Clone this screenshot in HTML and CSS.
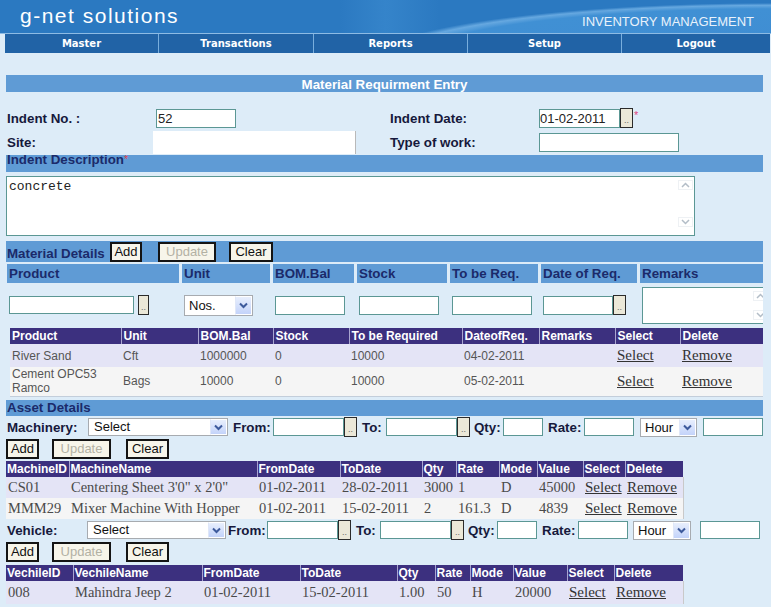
FILE: index.html
```html
<!DOCTYPE html>
<html>
<head>
<meta charset="utf-8">
<title>Material Requirment Entry</title>
<link rel="stylesheet" href="styles.css">
</head>
<body>
<header class="masthead">
  <div class="brand">g-net solutions</div>
  <div class="tagline">INVENTORY MANAGEMENT</div>
</header>
<nav class="menu">
  <a class="menu-item">Master</a>
  <a class="menu-item">Transactions</a>
  <a class="menu-item">Reports</a>
  <a class="menu-item">Setup</a>
  <a class="menu-item">Logout</a>
</nav>
<main class="page">
  <div class="title-bar">Material Requirment Entry</div>

  <div class="head-form">
    <div class="lbl">Indent No. :</div>
    <div class="cell"><input class="txt w-indent" value="52"></div>
    <div class="lbl">Indent Date:</div>
    <div class="cell"><input class="txt w-date" value="01-02-2011"><button class="pick">..</button><span class="req">*</span></div>
    <div class="lbl">Site:</div>
    <div class="cell"><div class="site-box"></div></div>
    <div class="lbl">Type of work:</div>
    <div class="cell"><input class="txt w-work" value=""></div>
  </div>

  <div class="bar bar-desc"><span class="bar-label">Indent Description<span class="req-inline">*</span></span></div>

  <div class="memo">
    <div class="memo-text">concrete</div>
    <div class="vscroll">
      <span class="sb-arrow"><svg width="9" height="6" viewBox="0 0 9 6"><path d="M1 5 L4.5 1.5 L8 5" fill="none" stroke="#b3bdc7" stroke-width="1.5"/></svg></span>
      <span class="sb-arrow"><svg width="9" height="6" viewBox="0 0 9 6"><path d="M1 1 L4.5 4.5 L8 1" fill="none" stroke="#b3bdc7" stroke-width="1.5"/></svg></span>
    </div>
  </div>

  <div class="bar bar-tools">
    <span class="bar-title">Material Details</span>
    <button class="btn b-add">Add</button>
    <button class="btn b-update">Update</button>
    <button class="btn b-clear">Clear</button>
  </div>

  <div class="mat-grid mat-head">
    <div class="mh">Product</div>
    <div class="mh">Unit</div>
    <div class="mh">BOM.Bal</div>
    <div class="mh">Stock</div>
    <div class="mh">To be Req.</div>
    <div class="mh">Date of Req.</div>
    <div class="mh">Remarks</div>
  </div>
  <div class="mat-grid mat-inputs">
    <div class="mi"><input class="txt w-prod"><button class="pick pick-prod">..</button></div>
    <div class="mi"><div class="dd w-unit"><span class="dd-text">Nos.</span><span class="dd-btn"><svg width="9" height="7" viewBox="0 0 9 7"><path d="M1 1.5 L4.5 5 L8 1.5" fill="none" stroke="#3d5a9c" stroke-width="2"/></svg></span></div></div>
    <div class="mi"><input class="txt w-bom"></div>
    <div class="mi"><input class="txt w-stock"></div>
    <div class="mi"><input class="txt w-toreq"></div>
    <div class="mi"><input class="txt w-dreq"><button class="pick">..</button></div>
    <div class="mi">
      <div class="remarks-box">
        <div class="vscroll vscroll-small">
          <span class="sb-arrow"><svg width="9" height="6" viewBox="0 0 9 6"><path d="M1 5 L4.5 1.5 L8 5" fill="none" stroke="#b3bdc7" stroke-width="1.5"/></svg></span>
          <span class="sb-arrow"><svg width="9" height="6" viewBox="0 0 9 6"><path d="M1 1 L4.5 4.5 L8 1" fill="none" stroke="#b3bdc7" stroke-width="1.5"/></svg></span>
        </div>
      </div>
    </div>
  </div>

  <table class="grid mat-table">
    <thead>
      <tr>
        <th class="m1">Product</th><th class="m2">Unit</th><th class="m3">BOM.Bal</th><th class="m4">Stock</th><th class="m5">To be Required</th><th class="m6">DateofReq.</th><th class="m7">Remarks</th><th class="m8">Select</th><th class="m9">Delete</th>
      </tr>
    </thead>
    <tbody>
      <tr class="r1 mr1">
        <td>River Sand</td><td>Cft</td><td>1000000</td><td>0</td><td>10000</td><td>04-02-2011</td><td></td><td><a class="lnk">Select</a></td><td><a class="lnk">Remove</a></td>
      </tr>
      <tr class="r2 mr2">
        <td>Cement OPC53 Ramco</td><td>Bags</td><td>10000</td><td>0</td><td>10000</td><td>05-02-2011</td><td></td><td><a class="lnk">Select</a></td><td><a class="lnk">Remove</a></td>
      </tr>
    </tbody>
  </table>

  <div class="bar bar-asset">Asset Details</div>

  <div class="asset-row machinery">
    <span class="alabel first">Machinery:</span>
    <div class="dd w-mach"><span class="dd-text">Select</span><span class="dd-btn"><svg width="9" height="7" viewBox="0 0 9 7"><path d="M1 1.5 L4.5 5 L8 1.5" fill="none" stroke="#3d5a9c" stroke-width="2"/></svg></span></div>
    <span class="alabel">From:</span>
    <input class="txt w-adate">
    <button class="pick">..</button>
    <span class="alabel">To:</span>
    <input class="txt w-adate">
    <button class="pick">..</button>
    <span class="alabel">Qty:</span>
    <input class="txt w-qty">
    <span class="alabel">Rate:</span>
    <input class="txt w-rate">
    <div class="dd w-hour"><span class="dd-text">Hour</span><span class="dd-btn"><svg width="9" height="7" viewBox="0 0 9 7"><path d="M1 1.5 L4.5 5 L8 1.5" fill="none" stroke="#3d5a9c" stroke-width="2"/></svg></span></div>
    <input class="txt w-last">
  </div>
  <div class="btn-row">
    <button class="btn a-add">Add</button>
    <button class="btn a-update">Update</button>
    <button class="btn a-clear">Clear</button>
  </div>

  <table class="grid asset-table machine-table">
    <thead>
      <tr>
        <th class="k1">MachineID</th><th class="k2">MachineName</th><th class="k3">FromDate</th><th class="k4">ToDate</th><th class="k5">Qty</th><th class="k6">Rate</th><th class="k7">Mode</th><th class="k8">Value</th><th class="k9">Select</th><th class="k10">Delete</th>
      </tr>
    </thead>
    <tbody>
      <tr class="r1">
        <td>CS01</td><td>Centering Sheet 3'0" x 2'0"</td><td>01-02-2011</td><td>28-02-2011</td><td>3000</td><td>1</td><td>D</td><td>45000</td><td><a class="lnk">Select</a></td><td><a class="lnk">Remove</a></td>
      </tr>
      <tr class="r2">
        <td>MMM29</td><td>Mixer Machine With Hopper</td><td>01-02-2011</td><td>15-02-2011</td><td>2</td><td>161.3</td><td>D</td><td>4839</td><td><a class="lnk">Select</a></td><td><a class="lnk">Remove</a></td>
      </tr>
    </tbody>
  </table>

  <div class="asset-row vehicle">
    <span class="alabel first">Vehicle:</span>
    <div class="dd w-veh"><span class="dd-text">Select</span><span class="dd-btn"><svg width="9" height="7" viewBox="0 0 9 7"><path d="M1 1.5 L4.5 5 L8 1.5" fill="none" stroke="#3d5a9c" stroke-width="2"/></svg></span></div>
    <span class="alabel">From:</span>
    <input class="txt w-adate">
    <button class="pick">..</button>
    <span class="alabel">To:</span>
    <input class="txt w-adate">
    <button class="pick">..</button>
    <span class="alabel">Qty:</span>
    <input class="txt w-qty">
    <span class="alabel">Rate:</span>
    <input class="txt w-rate">
    <div class="dd w-hour2"><span class="dd-text">Hour</span><span class="dd-btn"><svg width="9" height="7" viewBox="0 0 9 7"><path d="M1 1.5 L4.5 5 L8 1.5" fill="none" stroke="#3d5a9c" stroke-width="2"/></svg></span></div>
    <input class="txt w-last">
  </div>
  <div class="btn-row">
    <button class="btn a-add">Add</button>
    <button class="btn a-update">Update</button>
    <button class="btn a-clear">Clear</button>
  </div>

  <table class="grid asset-table vehicle-table">
    <thead>
      <tr>
        <th class="v1">VechileID</th><th class="v2">VechileName</th><th class="v3">FromDate</th><th class="v4">ToDate</th><th class="v5">Qty</th><th class="v6">Rate</th><th class="v7">Mode</th><th class="v8">Value</th><th class="v9">Select</th><th class="v10">Delete</th>
      </tr>
    </thead>
    <tbody>
      <tr class="r1 vr1">
        <td>008</td><td>Mahindra Jeep 2</td><td>01-02-2011</td><td>15-02-2011</td><td>1.00</td><td>50</td><td>H</td><td>20000</td><td><a class="lnk">Select</a></td><td><a class="lnk">Remove</a></td>
      </tr>
    </tbody>
  </table>
</main>
</body>
</html>
```

FILE: styles.css
```css
* { box-sizing: border-box; }
html, body { margin: 0; padding: 0; }
body {
  width: 771px;
  height: 607px;
  overflow: hidden;
  background: #ddecf8;
  font-family: "Liberation Sans", Arial, sans-serif;
  color: #16193c;
}

/* ---------- masthead ---------- */
.masthead {
  height: 34px;
  display: flex;
  justify-content: space-between;
  border-bottom: 1px solid #8dbbe4;
  background:
    radial-gradient(ellipse 400px 58px at 100% 61px, #3f8cd2 0%, #4090d4 90%, #66a8e0 96%, rgba(43,121,193,0) 100%),
    linear-gradient(90deg, #2b79c1 0%, #2b79c1 44%, #3584ca 50%, #2b79c1 57%, #2b79c1 100%);
}
.brand {
  color: #fff;
  font-size: 21px;
  letter-spacing: 1.5px;
  line-height: 24px;
  padding: 4px 0 0 20px;
}
.tagline {
  color: #e9f2fb;
  font-size: 13px;
  line-height: 15px;
  padding: 14px 17px 0 0;
}

/* ---------- menu ---------- */
.menu {
  display: grid;
  grid-template-columns: 153px 155px 154px 154px 149px;
  margin-left: 5px;
  width: 765px;
  height: 19px;
  background: #2163a6;
}
.menu-item {
  border-left: 1px solid #79aedd;
  color: #fff;
  font-family: "DejaVu Sans", Verdana, sans-serif;
  font-weight: bold;
  font-size: 10px;
  line-height: 19px;
  text-align: center;
}
.menu-item:first-child { border-left: 0; }

/* ---------- page ---------- */
.page {
  margin: 22px 0 0 6px;
  width: 757px;
  overflow: hidden;
}
.title-bar {
  height: 17px;
  background: #5f9bd5;
  color: #fff;
  font-weight: bold;
  font-size: 13.33px;
  line-height: 16px;
  padding-top: 2px;
  text-align: center;
  overflow: hidden;
}

/* ---------- head form ---------- */
.head-form {
  display: grid;
  grid-template-columns: 147px 236px 150px 1fr;
  grid-template-rows: 24px 25px;
  padding-top: 14px;
  align-items: center;
}
.lbl {
  font-weight: bold;
  font-size: 13.33px;
  line-height: 15px;
  padding-left: 1px;
  color: #16193c;
}
.cell { display: flex; align-items: center; }

.txt {
  height: 19px;
  border: 1px solid #5b9794;
  background: #fff;
  font-family: "Liberation Sans", Arial, sans-serif;
  font-size: 13px;
  color: #222;
  padding: 0 1px;
  margin: 0;
  outline: none;
  border-radius: 0;
}
.w-indent { width: 80px; margin-left: 3px; }
.w-date { width: 81px; padding: 0; }
.w-work { width: 140px; }

.pick {
  width: 13px;
  height: 20px;
  border: 1px solid #2b2b2b;
  background: #ebe8d8;
  margin: 0;
  padding: 0 0 3px 0;
  font-family: "Liberation Sans", Arial, sans-serif;
  font-size: 9px;
  color: #6a6a6a;
  line-height: 8px;
  display: flex;
  align-items: flex-end;
  justify-content: center;
  border-radius: 0;
}
.req {
  color: #e0457d;
  font-size: 11px;
  line-height: 10px;
  align-self: flex-start;
  margin: 2px 0 0 1px;
}
.site-box {
  width: 203px;
  height: 23px;
  background: #fff;
  border-right: 1px solid #b9b9b9;
}

/* ---------- bars ---------- */
.bar {
  background: #5f9bd5;
  color: #1b2a6a;
  font-weight: bold;
  font-size: 13.33px;
}
.bar-desc {
  display: flex;
  height: 17px;
  padding-left: 1px;
}
.bar-label {
  display: block;
  line-height: 13px;
  margin-top: -2px;
}
.req-inline {
  color: #e0404a;
  font-size: 10px;
  vertical-align: top;
  font-weight: normal;
}

.memo {
  display: flex;
  margin-top: 4px;
  width: 689px;
  height: 60px;
  border: 1px solid #5b9794;
  background: #fff;
}
.memo-text {
  flex: 1;
  font-family: "Liberation Mono", "Courier New", monospace;
  font-size: 13px;
  line-height: 15px;
  padding: 2px;
  color: #222;
}
.vscroll {
  width: 16px;
  display: flex;
  flex-direction: column;
  justify-content: space-between;
  padding: 3px 1px 8px 0;
}
.vscroll-small { padding: 3px 1px 3px 0; }
.sb-arrow {
  width: 15px;
  height: 10px;
  display: flex;
  align-items: center;
  justify-content: center;
  border: 1px solid #eef1f4;
}

.bar-tools {
  margin-top: 5px;
  height: 21px;
  display: flex;
  align-items: flex-end;
}
.bar-title {
  width: 104px;
  padding: 0 0 1px 1px;
  line-height: 15px;
}
.btn {
  height: 20px;
  border: 2px solid #141414;
  background: #f7f5ea;
  font-family: "Liberation Sans", Arial, sans-serif;
  font-size: 13px;
  color: #111;
  padding: 0;
  margin: 0;
  line-height: 16px;
  border-radius: 0;
}
.b-add { width: 32px; }
.b-update { width: 58px; margin-left: 16px; color: #b3b1a4; }
.b-clear { width: 44px; margin-left: 13px; }

/* ---------- material entry grid ---------- */
.mat-grid {
  display: grid;
  grid-template-columns: 172px 88px 81px 90px 88px 96px 1fr;
  column-gap: 3px;
  margin-left: 1px;
}
.mat-head { margin-top: 2px; height: 19px; }
.mh {
  background: #5f9bd5;
  color: #1b2a6a;
  font-weight: bold;
  font-size: 13.33px;
  line-height: 19px;
  padding-left: 2px;
  white-space: nowrap;
}
.mat-inputs { height: 44px; align-items: center; }
.mi { display: flex; align-items: center; padding-left: 2px; }
.w-prod { width: 125px; height: 18px; }
.pick-prod { width: 11px; margin-left: 4px; }
.w-bom { width: 70px; }
.w-stock { width: 80px; }
.w-toreq { width: 80px; }
.w-dreq { width: 70px; }

.dd {
  display: flex;
  border: 1px solid #a7abb0;
  background: #fff;
}
.dd-text {
  flex: 1;
  font-size: 13px;
  color: #111;
  padding-left: 4px;
  white-space: nowrap;
}
.dd-btn {
  width: 17px;
  display: flex;
  align-items: center;
  justify-content: center;
  background: linear-gradient(#e8effd, #c3d3fa);
  border: 1px solid #fff;
  border-left-color: #dfe7f8;
}
.w-unit { width: 69px; height: 21px; }
.w-unit .dd-text { line-height: 19px; }

.remarks-box {
  width: 128px;
  height: 37px;
  border: 1px solid #5b9794;
  background: #fff;
  display: flex;
  justify-content: flex-end;
}

/* ---------- data grids ---------- */
.grid {
  border-collapse: collapse;
  table-layout: fixed;
}
.grid th {
  background: #3c307f;
  color: #fff;
  font-weight: bold;
  font-size: 12px;
  text-align: left;
  height: 16px;
  padding: 0 1px;
  line-height: 14px;
  border-left: 1px solid #a9a5d0;
  white-space: nowrap;
  overflow: hidden;
}
.grid th:first-child { border-left: 0; }
.r1 { background: #e4e4f6; }
.r2 { background: #f5f5f5; }
.lnk {
  font-family: "Liberation Serif", "Times New Roman", serif;
  font-size: 15px;
  color: #333;
  text-decoration: underline;
}

.mat-table {
  margin: 1px 0 0 4px;
  width: 753px;
  border-bottom: 1px solid #c3cedb;
}
.mat-table td {
  font-size: 12px;
  color: #555;
  padding: 0 2px;
  line-height: 14px;
}
.mat-table th { padding-left: 2px; }
.mr1 { height: 23px; }
.mr2 { height: 29px; }
.m1 { width: 111px; } .m2 { width: 77px; } .m3 { width: 75px; }
.m4 { width: 76px; } .m5 { width: 113px; } .m6 { width: 77px; }
.m7 { width: 76px; } .m8 { width: 65px; } .m9 { width: 83px; }

.bar-asset {
  margin-top: 3px;
  height: 16px;
  line-height: 16px;
  padding-left: 1px;
}

/* ---------- asset rows ---------- */
.asset-row {
  display: grid;
  align-items: center;
  height: 21px;
  margin-top: 1px;
}
.machinery {
  grid-template-columns: 82px 145px 40px 71px 18px 24px 71px 17px 29px 45px 36px 56px 63px 60px;
}
.vehicle {
  grid-template-columns: 81px 141px 39px 71px 18px 24px 71px 17px 29px 45px 36px 55px 67px 60px;
}
.alabel {
  font-weight: bold;
  font-size: 13.33px;
  line-height: 15px;
  color: #16193c;
  white-space: nowrap;
}
.alabel.first { padding-left: 1px; }
.asset-row .txt { height: 18px; }
.w-adate { width: 71px; }
.w-qty { width: 40px; }
.w-rate { width: 50px; }
.w-last { width: 60px; }
.w-mach { width: 140px; height: 18px; }
.w-veh { width: 139px; height: 18px; }
.w-hour { width: 57px; height: 19px; }
.w-hour2 { width: 58px; height: 19px; }
.w-mach .dd-text, .w-veh .dd-text { line-height: 16px; padding-left: 5px; }
.w-hour .dd-text, .w-hour2 .dd-text { line-height: 17px; }

.btn-row {
  display: flex;
  height: 20px;
  margin-top: 1px;
}
.a-add { width: 33px; }
.a-update { width: 59px; margin-left: 13px; color: #b3b1a4; }
.a-clear { width: 43px; margin-left: 15px; }

.asset-table { width: 677px; }
.asset-table td {
  font-family: "Liberation Serif", "Times New Roman", serif;
  font-size: 14.5px;
  color: #4a4a4a;
  padding: 0 2px;
  height: 21px;
  white-space: nowrap;
  overflow: hidden;
}
.asset-table tbody tr { border-right: 1px solid #c9c9c9; }
.machine-table { margin-top: 2px; }
.vehicle-table { margin-top: 3px; }
.vr1 td { height: 23px; }

.k1 { width: 63px; } .k2 { width: 188px; } .k3 { width: 83px; } .k4 { width: 82px; }
.k5 { width: 34px; } .k6 { width: 43px; } .k7 { width: 38px; } .k8 { width: 46px; }
.k9 { width: 42px; } .k10 { width: 58px; }

.v1 { width: 67px; } .v2 { width: 129px; } .v3 { width: 98px; } .v4 { width: 97px; }
.v5 { width: 38px; } .v6 { width: 35px; } .v7 { width: 43px; } .v8 { width: 54px; }
.v9 { width: 47px; } .v10 { width: 69px; }
```
